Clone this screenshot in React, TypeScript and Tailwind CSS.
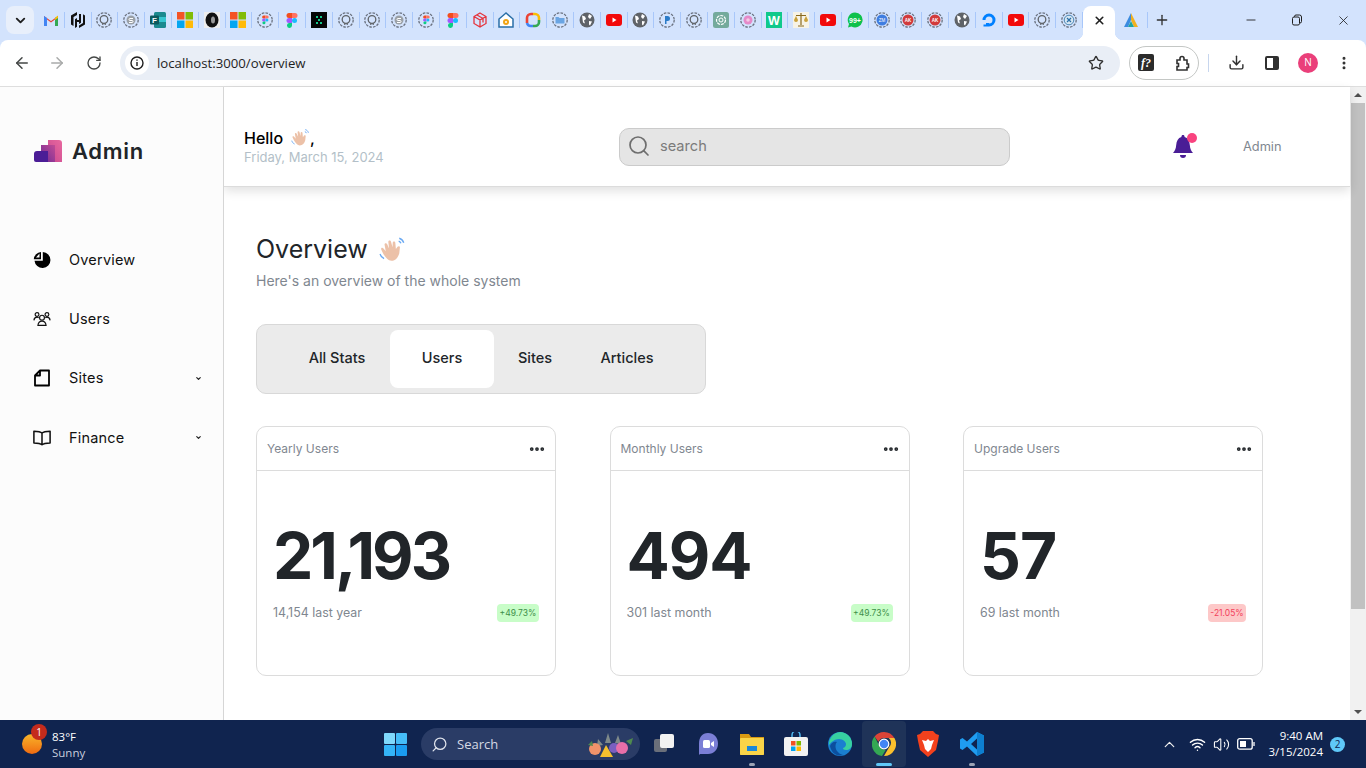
import { ArrowLeft, ArrowRight, ChevronDown, ChevronUp, Download, Ellipsis, EllipsisVertical, Minus, Plus, RotateCw, Search, Star, Volume2, Wifi, X } from "lucide-react";

const UI = "font-['Inter',sans-serif]";
const SEGOE = "font-['Open_Sans',sans-serif]";

const FAVS = ["gmail", "hash", "gh", "s", "forms", "ms", "ring", "ms2", "figd", "figma", "x", "gh", "gh", "s", "figd", "figma", "cube", "home", "google", "folder", "globe", "yt", "globe", "p", "gh", "gpt", "flower", "w", "scale", "yt", "wa", "zm", "ak", "ak", "globe", "do", "yt", "gh", "xd"];

function Dashed({ fill = "none", children }: { fill?: string; children?: React.ReactNode }) {
  return (
    <svg width="16" height="16" viewBox="0 0 16 16">
      <circle cx="8" cy="8" r="7.2" fill={fill} stroke="#6b7280" strokeWidth="1.3" strokeDasharray="2.6 1.2" />
      {children}
    </svg>
  );
}

function FigmaMark() {
  return (
    <>
      <path d="M5 1h3v5H5a2.5 2.5 0 0 1 0-5z" fill="#f24e1e" />
      <path d="M8 1h3a2.5 2.5 0 0 1 0 5H8z" fill="#ff7262" />
      <path d="M5 6h3v5H5a2.5 2.5 0 0 1 0-5z" fill="#a259ff" />
      <circle cx="10.5" cy="8.5" r="2.5" fill="#1abcfe" />
      <path d="M5 11h3v2.5a2.5 2.5 0 1 1-3-2.5z" fill="#0acf83" />
    </>
  );
}

function MsMark({ a, b, c, d }: { a: string; b: string; c: string; d: string }) {
  return (
    <svg width="16" height="16" viewBox="0 0 16 16">
      <rect width="7.5" height="7.5" fill={a} />
      <rect x="8.5" width="7.5" height="7.5" fill={b} />
      <rect y="8.5" width="7.5" height="7.5" fill={c} />
      <rect x="8.5" y="8.5" width="7.5" height="7.5" fill={d} />
    </svg>
  );
}

function Globe() {
  return (
    <svg width="16" height="16" viewBox="0 0 16 16">
      <circle cx="8" cy="8" r="7.5" fill="#5f6368" />
      <path d="M3 3.5l3 1 1 2.5-2 1.5 1 3-2-1zM10 2l3 2-2 3-2-2zM10 9l3 .5-2 4-1-1z" fill="#fff" />
    </svg>
  );
}

function Fav({ kind }: { kind: string }) {
  switch (kind) {
    case "gmail":
      return (
        <svg width="16" height="16" viewBox="0 0 16 16">
          <path d="M1 14V4l7 5 7-5v10h-3V7.500L8 10.500 4 7.500V14z" fill="#ea4335" />
          <path d="M1 4v10h3V6z" fill="#4285f4" />
          <path d="M15 4v10h-3V6z" fill="#34a853" />
          <path d="M12 6l3-2.500V6l-3 2z" fill="#fbbc04" />
        </svg>
      );
    case "hash":
      return (
        <svg width="16" height="16" viewBox="0 0 16 16" fill="#111">
          <path d="M7 0L1 3.500v9l2.500 1.500V5L7 3zM9 2v6H7V6L5 7.200V16l2-1.200V10h2v2l2-1.200V2zM13 2.200V11L9 13.500V16l6-3.500v-9z" />
        </svg>
      );
    case "gh":
      return (
        <Dashed>
          <circle cx="8" cy="7.500" r="3.800" fill="none" stroke="#5f6368" strokeWidth="1.300" />
          <path d="M6.800 11v2M9.200 11v2" stroke="#5f6368" strokeWidth="1.200" />
        </Dashed>
      );
    case "s":
      return (
        <Dashed>
          <circle cx="8" cy="8" r="4.500" fill="#9aa0a6" />
          <path d="M10 6.500H7a1 1 0 0 0 0 2h2a1 1 0 0 1 0 2H6" fill="none" stroke="#fff" strokeWidth="1" />
        </Dashed>
      );
    case "forms":
      return (
        <svg width="16" height="16" viewBox="0 0 16 16">
          <rect x="4" y="0" width="12" height="16" rx="1.500" fill="#1b8a8f" />
          <rect x="4" y="5" width="12" height="5" fill="#37c6d0" />
          <rect y="3.500" width="9" height="9" rx="1" fill="#0b5a5f" />
          <text x="4.500" y="11" textAnchor="middle" fontSize="8" fontWeight="700" fill="#fff" fontFamily="Liberation Sans">F</text>
        </svg>
      );
    case "ms":
      return <MsMark a="#f35325" b="#81bc06" c="#05a6f0" d="#ffba08" />;
    case "ms2":
      return <MsMark a="#f35325" b="#81bc06" c="#05a6f0" d="#ffba08" />;
    case "ring":
      return (
        <svg width="16" height="16" viewBox="0 0 16 16">
          <rect width="16" height="16" fill="#eee" />
          <ellipse cx="8" cy="8" rx="6.500" ry="7.500" fill="#111" />
          <ellipse cx="9" cy="8" rx="2" ry="3.500" fill="#999" />
        </svg>
      );
    case "figd":
      return (
        <Dashed>
          <g transform="translate(3.600 2.800) scale(.6)">
            <FigmaMark />
          </g>
        </Dashed>
      );
    case "figma":
      return (
        <svg width="16" height="16" viewBox="0 0 16 16">
          <FigmaMark />
        </svg>
      );
    case "x":
      return (
        <svg width="16" height="16" viewBox="0 0 16 16">
          <rect width="16" height="16" fill="#050505" />
          <path d="M5 4h2v2H5zM9 4h2v2H9zM7 7h2v2H7zM5 10h2v2H5zM9 10h2v2H9z" fill="#14c88c" />
        </svg>
      );
    case "cube":
      return (
        <svg width="16" height="16" viewBox="0 0 16 16" fill="none" stroke="#e5343d" strokeWidth="1.300">
          <path d="M8 1l6 3.500v7L8 15l-6-3.500v-7zM2 4.500L8 8l6-3.500M8 8v7M5 3l6 3.500v4" />
        </svg>
      );
    case "home":
      return (
        <svg width="16" height="16" viewBox="0 0 16 16">
          <path d="M8 1L1 7v8h14V7z" fill="#fff" stroke="#2a6fa8" strokeWidth="1.500" />
          <circle cx="8" cy="10" r="3" fill="#f2a516" />
          <circle cx="8" cy="10" r="1" fill="#fff" />
        </svg>
      );
    case "google":
      return (
        <svg width="16" height="16" viewBox="0 0 16 16" fill="none" strokeWidth="2.600">
          <path d="M2 11V6a4 4 0 0 1 4-4h2" stroke="#ea4335" />
          <path d="M8 2h2a4 4 0 0 1 4 4v2" stroke="#fbbc04" />
          <path d="M14 8v2a4 4 0 0 1-4 4H8" stroke="#34a853" />
          <path d="M8 14H6a4 4 0 0 1-4-3" stroke="#4285f4" />
        </svg>
      );
    case "folder":
      return (
        <Dashed>
          <path d="M3.500 5h3l1 1h5v5.500h-9z" fill="#6aa5e3" />
        </Dashed>
      );
    case "globe":
      return <Globe />;
    case "yt":
      return (
        <svg width="16" height="16" viewBox="0 0 16 16">
          <rect y="2" width="16" height="12" rx="3" fill="#f20a0a" />
          <path d="M6.500 5.500L10.500 8l-4 2.500z" fill="#fff" />
        </svg>
      );
    case "p":
      return (
        <Dashed>
          <path d="M6 4h2.500a2 2 0 0 1 0 5H7.500v3H6z" fill="#2a7bc8" />
        </Dashed>
      );
    case "gpt":
      return (
        <svg width="16" height="16" viewBox="0 0 16 16">
          <rect width="16" height="16" rx="2.500" fill="#74aa9c" />
          <circle cx="8" cy="8" r="4.500" fill="none" stroke="#fff" strokeWidth="1.200" strokeDasharray="3 1" />
          <circle cx="8" cy="8" r="2" fill="none" stroke="#fff" strokeWidth="1" />
        </svg>
      );
    case "flower":
      return (
        <Dashed>
          <circle cx="8" cy="8" r="4.500" fill="#e58ac9" />
          <circle cx="8" cy="8" r="1.800" fill="#f6c9e6" />
        </Dashed>
      );
    case "w":
      return (
        <svg width="16" height="16" viewBox="0 0 16 16">
          <rect width="16" height="16" fill="#0fc98b" />
          <text x="8" y="13" textAnchor="middle" fontSize="12.500" fontWeight="700" fill="#fff" fontFamily="Liberation Sans">W</text>
        </svg>
      );
    case "scale":
      return (
        <svg width="16" height="16" viewBox="0 0 16 16">
          <rect width="16" height="16" fill="#f7f3e6" />
          <path d="M8 1v12M3 3.500h10M5 14h6" stroke="#8a6a1f" strokeWidth="1.200" />
          <path d="M1 8l2-4 2 4a2 2 0 0 1-4 0zM11 8l2-4 2 4a2 2 0 0 1-4 0z" fill="#c9a13b" />
        </svg>
      );
    case "wa":
      return (
        <svg width="16" height="16" viewBox="0 0 16 16">
          <path d="M8 .500a7.500 7.500 0 1 1-3.500 14.100L1 15.500l1-3.400A7.500 7.500 0 0 1 8 .500z" fill="#0fc14b" />
          <text x="8" y="10.500" textAnchor="middle" fontSize="7" fontWeight="700" fill="#fff" fontFamily="Liberation Sans">99+</text>
        </svg>
      );
    case "zm":
      return (
        <Dashed>
          <circle cx="8" cy="8" r="5.500" fill="#3f7de0" />
          <text x="8" y="9.800" textAnchor="middle" fontSize="4.500" fill="#fff" fontFamily="Liberation Sans">ZM</text>
        </Dashed>
      );
    case "ak":
      return (
        <Dashed>
          <circle cx="8" cy="8" r="5.500" fill="#d23b3b" />
          <text x="8" y="9.800" textAnchor="middle" fontSize="4.500" fontWeight="700" fill="#fff" fontFamily="Liberation Sans">AK</text>
        </Dashed>
      );
    case "do":
      return (
        <svg width="16" height="16" viewBox="0 0 16 16" fill="none">
          <path d="M8 14.500V11.500a3.500 3.500 0 1 0-3.500-3.500H1.500A6.500 6.500 0 1 1 8 14.500z" fill="#0080ff" />
          <path d="M5 11h3v3.500H5zM2.500 12.500H5v2H2.500z" fill="#0080ff" />
        </svg>
      );
    default:
      return (
        <Dashed>
          <circle cx="8" cy="8" r="4.800" fill="#d6e6f2" stroke="#4b86b4" strokeWidth="1" />
          <path d="M6 6l4 4M10 6l-4 4" stroke="#2a6fa8" strokeWidth="1.200" />
        </Dashed>
      );
  }
}

function TabStrip() {
  return (
    <div className="flex h-10 shrink-0 items-center">
      <div className="ml-[6px] mr-[4px] flex h-[28px] w-[28px] shrink-0 items-center justify-center rounded-lg bg-[#e8effb]">
        <ChevronDown size={15} strokeWidth={3} className="text-[#1f1f1f]" />
      </div>
      {FAVS.map((kind, i) => (
        <div key={i} className="flex h-[16px] w-[26.800px] shrink-0 items-center justify-between">
          <div className="flex w-[25.800px] justify-center">
            <Fav kind={kind} />
          </div>
          <div className="h-[16px] w-px bg-[#a8c7fa]" />
        </div>
      ))}
      <div className="relative mt-[6px] flex h-[34px] w-[32px] shrink-0 items-center justify-center rounded-t-lg bg-white">
        <X size={13} strokeWidth={3} className="mb-[6px] text-[#1f1f1f]" />
        <span className="absolute bottom-0 left-[-8px] h-[8px] w-[8px] bg-[radial-gradient(circle_at_0_0,#d3e3fd_8px,#ffffff_8.500px)]" />
        <span className="absolute bottom-0 right-[-8px] h-[8px] w-[8px] bg-[radial-gradient(circle_at_100%_0,#d3e3fd_8px,#ffffff_8.500px)]" />
      </div>
      <div className="flex w-[32px] shrink-0 justify-center">
        <svg width="16" height="16" viewBox="0 0 16 16">
          <path d="M8 1L1 15h4l3-7z" fill="#3b8be0" />
          <path d="M8 1l7 14h-4L8 8z" fill="#f2b01e" />
          <path d="M5 15l3-6 3 6z" fill="#1ea5a0" />
        </svg>
      </div>
      <div className="h-[16px] w-px bg-[#a8c7fa]" />
      <div className="flex w-[27px] shrink-0 justify-center">
        <Plus size={16} strokeWidth={2} className="text-[#303030]" />
      </div>
      <div className="ml-auto flex items-center text-[#1f1f1f]">
        <div className="flex w-[46px] justify-center">
          <Minus size={14} strokeWidth={1.500} />
        </div>
        <div className="flex w-[46px] justify-center">
          <svg width="12" height="12" viewBox="0 0 12 12" fill="none" stroke="currentColor">
            <rect x="1.500" y="3" width="7" height="8" rx="1.500" />
            <path d="M3.500 3V2.500a1.500 1.500 0 0 1 1.500-1.500h3.500a2 2 0 0 1 2 2v4.500a1.500 1.500 0 0 1-1.500 1.500" />
          </svg>
        </div>
        <div className="flex w-[46px] justify-center">
          <X size={15} strokeWidth={1.300} />
        </div>
      </div>
    </div>
  );
}

function Toolbar() {
  return (
    <div className="flex h-[47px] shrink-0 items-center rounded-t-lg border-b border-[#dedede] bg-white pb-px">
      <div className="flex w-[120px] shrink-0 items-center pl-[13px] text-[#444746]">
        <ArrowLeft size={18} strokeWidth={2} />
        <ArrowRight size={18} strokeWidth={2} className="ml-[17px] text-[#a9abaa]" />
        <RotateCw size={16} strokeWidth={2} className="ml-[20px]" />
      </div>
      <div className="flex h-[34px] w-[1000px] shrink-0 items-center rounded-full bg-[#e9eef6] pl-[5px] pr-[16px]">
        <div className="flex h-[24px] w-[24px] items-center justify-center rounded-full bg-white">
          <svg width="14" height="14" viewBox="0 0 14 14" fill="none" stroke="#1f1f1f" strokeWidth="1.400">
            <circle cx="7" cy="7" r="6" />
            <path d="M7 6v4M7 3.500v1.200" />
          </svg>
        </div>
        <span className={`ml-[8px] mt-[2px] text-[13.200px] text-[#1f1f1f] ${SEGOE}`}>localhost:3000/overview</span>
        <Star size={16} strokeWidth={2} className="ml-auto text-[#303030]" />
      </div>
      <div className="ml-[9px] flex h-[34px] w-[70px] shrink-0 items-center justify-between rounded-full border border-[#c4c7c5] pl-[8px] pr-[6px]">
        <div className="flex h-[17px] w-[16px] items-center justify-center rounded-[2px] bg-[#2b2b2b] font-['Liberation_Serif',serif] text-[12px] font-bold italic text-white">
          f?
        </div>
        <svg width="18" height="18" viewBox="0 0 18 18" fill="none" stroke="#303030" strokeWidth="1.600">
          <path d="M3 6h3V4.500a2 2 0 0 1 4 0V6h3v4h1.500v3.500H13V16H3v-3.500h1.500V9.500H3z" />
        </svg>
      </div>
      <div className="ml-[9px] h-[18px] w-px bg-[#c7d6ee]" />
      <div className="ml-[17px] flex w-[20px] justify-center text-[#303030]">
        <Download size={17} strokeWidth={2} />
      </div>
      <div className="ml-[16px] flex w-[20px] justify-center">
        <svg width="14" height="14" viewBox="0 0 14 14">
          <rect x="1" y="1" width="12" height="12" rx="1" fill="#fff" stroke="#303030" strokeWidth="2" />
          <rect x="8" y="1" width="5" height="12" fill="#303030" />
        </svg>
      </div>
      <div className={`ml-[16px] flex h-[20px] w-[20px] items-center justify-center rounded-full bg-[#ea3f7a] text-[10px] text-white ${SEGOE}`}>
        N
      </div>
      <EllipsisVertical size={16} strokeWidth={2.500} className="ml-[18px] text-[#303030]" />
    </div>
  );
}

function Logo() {
  return (
    <svg width="28" height="22" viewBox="0 0 28 22">
      <defs>
        <linearGradient id="lg1" x1="0" y1="1" x2="1" y2="0">
          <stop offset="0" stopColor="#c8478f" />
          <stop offset="1" stopColor="#e8689f" />
        </linearGradient>
        <linearGradient id="lg2" x1="0" y1="1" x2="1" y2="0">
          <stop offset="0" stopColor="#6e2a96" />
          <stop offset="1" stopColor="#c14b95" />
        </linearGradient>
      </defs>
      <path d="M14 0h11a3 3 0 0 1 3 3v19H14z" fill="url(#lg1)" />
      <path d="M7 5h14v17H7z" fill="url(#lg2)" />
      <path d="M3 11h11v11H2a2 2 0 0 1-2-2v-6a3 3 0 0 1 3-3z" fill="#4b1d96" />
    </svg>
  );
}

function PieIcon() {
  return (
    <svg width="18" height="18" viewBox="0 0 18 18">
      <path d="M9.800 1A8 8 0 1 1 1.500 9.800H9.800z" fill="#000" />
      <path d="M8 .900v7.300H.800A8 8 0 0 1 8 .900z" fill="#000" />
      <path d="M3 6.500L6.500 2.500v4z" fill="#fcfcfc" />
    </svg>
  );
}

function UsersIcon() {
  return (
    <svg width="20" height="16" viewBox="0 0 20 16" fill="none" stroke="#111" strokeWidth="1.300">
      <circle cx="10" cy="6.500" r="2.700" />
      <path d="M5.500 15c.3-3 2-4.700 4.500-4.700s4.200 1.700 4.500 4.700z" />
      <circle cx="4.500" cy="3" r="2.100" />
      <circle cx="15.500" cy="3" r="2.100" />
      <path d="M1 9.500c.2-2 1.500-3.500 3.500-3.500.7 0 1.300.2 1.800.5M19 9.500c-.2-2-1.500-3.500-3.500-3.500-.7 0-1.300.2-1.800.5" />
    </svg>
  );
}

function SiteIcon() {
  return (
    <svg width="18" height="18" viewBox="0 0 18 18" fill="none" stroke="#000" strokeWidth="1.800" strokeLinejoin="round">
      <path d="M7 1.500h9v15H2V6.500zM7 1.500v5H2" />
    </svg>
  );
}

function BookIcon() {
  return (
    <svg width="20" height="18" viewBox="0 0 20 18" fill="none" stroke="#111" strokeWidth="1.700" strokeLinejoin="round">
      <path d="M10 3.500C8.500 2 6 1.500 1 1.500v13c5 0 7.500.5 9 2 1.500-1.500 4-2 9-2v-13c-5 0-7.500.5-9 2zM10 3.500v13" />
    </svg>
  );
}

function NavItem({ icon, label, caret }: { icon: React.ReactNode; label: string; caret?: boolean }) {
  return (
    <div className="flex h-[59.300px] items-center pl-[33px] pr-[21px]">
      <div className="flex w-[18px] shrink-0 justify-center">{icon}</div>
      <span className={`ml-[18px] text-[14.500px] tracking-[0.200px] text-[#111] ${UI}`}>{label}</span>
      {caret && <ChevronDown size={7} strokeWidth={4} className="ml-auto text-[#222]" />}
    </div>
  );
}

function Sidebar() {
  return (
    <aside className="relative z-20 w-[224px] shrink-0 border-r border-[#d6d6d6] bg-[#fcfcfc]">
      <div className="flex items-center pl-[34px] pt-[53px]">
        <Logo />
        <span className={`ml-[10px] text-[22px] font-semibold leading-[22px] tracking-[0.700px] text-[#212529] ${UI}`}>Admin</span>
      </div>
      <nav className="mt-[68px]">
        <NavItem icon={<PieIcon />} label="Overview" />
        <NavItem icon={<UsersIcon />} label="Users" />
        <NavItem icon={<SiteIcon />} label="Sites" caret />
        <NavItem icon={<BookIcon />} label="Finance" caret />
      </nav>
    </aside>
  );
}

function Wave({ size }: { size: number }) {
  return (
    <svg width={size} height={size} viewBox="0 0 24 24" className="inline-block">
      <path d="M7 20c-3-3-4-6-5-8-.6-1.400 1-2.200 2-1l2 2.500L5 8c-.4-1.500 1.500-2.200 2.200-.8L9 11 8.300 5.500c-.2-1.600 2-2 2.400-.4l1.300 5 .2-4c.1-1.600 2.200-1.500 2.300 0l.5 5.500 1.500-2c1-1.200 2.600-.2 2 1.200L18 15.500c-1 3-2 5-4.500 6S9 22 7 20z" fill="#ecc1a8" />
      <path d="M18 2c2 .5 3.300 1.800 4 4M17.500 4.500c1 .3 1.700 1 2 2M1 16c.5 2 1.600 3.300 3.500 4.200" fill="none" stroke="#6aa9f2" strokeWidth="1.200" />
    </svg>
  );
}

function Header() {
  return (
    <header className="relative z-10 flex h-[100px] shrink-0 items-center border-b border-[#dcdcdc] bg-white pl-[20px] pt-[20px] shadow-[0_4px_10px_rgba(0,0,0,0.12)]">
      <div className="w-[375px] shrink-0">
        <div className={`flex items-center text-[16px] font-medium leading-[20px] text-black ${UI}`}>
          Hello <span className="ml-[8px] flex"><Wave size={19} /></span>,
        </div>
        <div className={`text-[13px] leading-[18px] text-[#b3bfc8] ${UI}`}>Friday, March 15, 2024</div>
      </div>
      <div className="flex h-[38px] w-[391px] shrink-0 items-center rounded-[10px] border border-[#cbcbcb] bg-[#e5e5e5] pl-[7px]">
        <Search size={24} strokeWidth={1.700} className="mb-px text-[#6e6e6e]" />
        <span className={`ml-[9px] text-[14.600px] text-[#7b7b7b] ${UI}`}>search</span>
      </div>
      <div className="relative ml-[160px] flex h-[26px] w-[26px] shrink-0 items-center justify-center">
        <svg width="24" height="26" viewBox="0 0 24 26">
          <path d="M12 1c1 0 1.500.6 1.600 2C17 4 18.500 7 18.800 11c.3 4 1.500 6 3.200 8H2c1.700-2 2.900-4 3.200-8C5.500 7 7 4 10.400 3c.1-1.400.6-2 1.600-2z" fill="#4a1d96" />
          <path d="M9 21h6a3 3 0 0 1-6 0z" fill="#4a1d96" />
        </svg>
        <span className="absolute right-[-1px] top-[-1px] h-[10px] w-[10px] rounded-full bg-[#f9437f]" />
      </div>
      <span className={`ml-[47px] mt-px text-[12.800px] text-[#7f8790] ${UI}`}>Admin</span>
    </header>
  );
}

function StatCard({ title, value, sub, delta, up, tight }: { title: string; value: string; sub: string; delta: string; up: boolean; tight?: boolean }) {
  return (
    <div className="h-[250px] w-[300px] shrink-0 rounded-[10px] border border-[#dcdcdc] bg-white">
      <div className="flex h-[44px] items-center justify-between border-b border-[#dcdcdc] pl-[10px] pr-[9px]">
        <span className={`mt-[1px] text-[12px] text-[#7f8790] ${UI}`}>{title}</span>
        <Ellipsis size={18} strokeWidth={3} className="text-[#212529]" />
      </div>
      <div className="px-[16px] pt-[45px]">
        <div className={`text-[64px] font-bold leading-[80px] text-[#212529] ${tight ? "tracking-[-3px]" : "tracking-[-1px]"} ${UI}`}>{value}</div>
        <div className="mt-[8px] flex items-center justify-between">
          <span className={`text-[12.400px] text-[#7f8790] ${UI}`}>{sub}</span>
          <span
            className={`flex h-[18px] items-center justify-center rounded-[4px] text-[8.500px] ${UI} ${
              up ? "w-[42px] bg-[#c8fdc8] text-[#3f8f4a]" : "w-[38px] bg-[#fdc8c8] text-[#f2405a]"
            }`}
          >
            {delta}
          </span>
        </div>
      </div>
    </div>
  );
}

function Tabs() {
  return (
    <div className={`mt-[33px] flex h-[70px] w-[450px] items-center rounded-[10px] border border-[#d8d8d8] bg-[#ebebeb] pl-[27px] text-[14.500px] font-medium leading-[20px] text-[#212529] ${UI}`}>
      <span className="mb-[2px] w-[106px] text-center">All Stats</span>
      <span className="flex h-[58px] w-[104px] items-center justify-center rounded-[8px] bg-white pb-[2px]">Users</span>
      <span className="mb-[2px] w-[82px] text-center">Sites</span>
      <span className="mb-[2px] w-[102px] text-center">Articles</span>
    </div>
  );
}

function Content() {
  return (
    <section className="flex-1 overflow-hidden bg-white pl-[32px] pt-[46px]">
      <div className="flex items-center">
        <h1 className={`text-[25px] leading-[32px] text-[#212529] ${UI}`}>Overview</h1>
        <span className="ml-[11px] flex"><Wave size={27} /></span>
      </div>
      <p className={`mt-[6px] text-[14px] leading-[20px] text-[#7f8790] ${UI}`}>Here's an overview of the whole system</p>
      <Tabs />
      <div className="mt-[32px] flex gap-[53.500px]">
        <StatCard title="Yearly Users" value="21,193" sub="14,154 last year" delta="+49.73%" up tight />
        <StatCard title="Monthly Users" value="494" sub="301 last month" delta="+49.73%" up />
        <StatCard title="Upgrade Users" value="57" sub="69 last month" delta="-21.05%" up={false} />
      </div>
    </section>
  );
}

function Scrollbar() {
  return (
    <div className="flex w-[16px] shrink-0 flex-col items-center bg-[#f1f1f1]">
      <div className="flex h-[16px] items-center justify-center">
        <div className="h-0 w-0 border-x-[4px] border-b-[4px] border-x-transparent border-b-[#505050]" />
      </div>
      <div className="h-[506px] w-[14px] bg-[#c1c1c1]" />
      <div className="mt-auto flex h-[16px] items-center justify-center">
        <div className="h-0 w-0 border-x-[4px] border-t-[4px] border-x-transparent border-t-[#505050]" />
      </div>
    </div>
  );
}

function TaskSlot({ children, active, dot }: { children: React.ReactNode; active?: boolean; dot?: boolean }) {
  return (
    <div className={`relative flex h-[46px] w-[44px] shrink-0 items-center justify-center rounded-[4px] ${active ? "bg-[#1f3358]" : ""}`}>
      {children}
      {dot && <span className="absolute bottom-[1px] h-[3px] w-[6px] rounded-full bg-[#9aa3b5]" />}
      {active && <span className="absolute bottom-[1px] h-[3px] w-[16px] rounded-full bg-[#5fc8f8]" />}
    </div>
  );
}

function Taskbar() {
  return (
    <footer className={`flex h-[48px] shrink-0 items-center bg-[#10244f] text-white ${SEGOE}`}>
      <div className="relative ml-[22px] h-[20px] w-[20px] shrink-0 rounded-full bg-gradient-to-b from-[#f7b52a] to-[#ef6a10]">
        <span className="absolute left-[9px] top-[-10px] flex h-[16px] w-[16px] items-center justify-center rounded-full bg-[#c42b1c] text-[10px]">1</span>
      </div>
      <div className="ml-[10px] mt-[2px] w-[321px] shrink-0 text-[11.500px] leading-[16px]">
        <div>83°F</div>
        <div className="text-[#c8cede]">Sunny</div>
      </div>
      <TaskSlot>
        <svg width="23" height="23" viewBox="0 0 23 23">
          <rect width="11" height="11" rx="1" fill="#7fd8fb" />
          <rect x="12" width="11" height="11" rx="1" fill="#45bdf8" />
          <rect y="12" width="11" height="11" rx="1" fill="#34b4f7" />
          <rect x="12" y="12" width="11" height="11" rx="1" fill="#1a9cf0" />
        </svg>
      </TaskSlot>
      <div className="ml-[4px] flex h-[32px] w-[219px] shrink-0 items-center rounded-full bg-[#2a3c66] pl-[10px]">
        <Search size={17} strokeWidth={1.800} className="-scale-x-100 text-[#dfe3ec]" />
        <span className="ml-[9px] mt-px text-[13px] text-[#d5d9e4]">Search</span>
        <svg width="54" height="30" viewBox="0 0 54 30" className="ml-auto mr-[4px]">
          <path d="M26 4l3 10-6 0zM36 6l3 9-6-1zM16 10l5 6-6 1z" fill="#7f8a8a" />
          <circle cx="13" cy="20" r="6" fill="#f0936a" />
          <path d="M18 28l6-12 7 12z" fill="#f4c02e" />
          <circle cx="32" cy="19" r="5" fill="#7a5fc0" />
          <circle cx="40" cy="19" r="6" fill="#e76fa8" />
          <path d="M44 12l7-3-2 7zM6 16l4-4 1 5z" fill="#4f8a4f" />
        </svg>
      </div>
      <div className="ml-[2px] flex">
        <TaskSlot>
          <svg width="20" height="20" viewBox="0 0 20 20">
            <rect y="5" width="13" height="13" rx="2" fill="#6a6f7a" />
            <rect x="6" width="14" height="14" rx="2" fill="#f2f2f2" />
          </svg>
        </TaskSlot>
        <TaskSlot>
          <svg width="24" height="24" viewBox="0 0 24 24">
            <path d="M12 1c6 0 10 4.500 10 10.500S18 22 12 22H4l-1 1V11.500C3 5.500 6 1 12 1z" fill="#7b7fd6" />
            <rect x="7" y="8" width="7" height="8" rx="1.500" fill="#fff" />
            <path d="M15 11l3-2v6l-3-2z" fill="#fff" />
          </svg>
        </TaskSlot>
        <TaskSlot dot>
          <svg width="24" height="24" viewBox="0 0 24 24">
            <path d="M0 2h9l2 3h13v17a1 1 0 0 1-1 1H1a1 1 0 0 1-1-1z" fill="#d99a12" />
            <rect y="6" width="24" height="17" rx="1" fill="#f9d448" />
            <rect x="7" y="14" width="10" height="5" fill="#1a88d8" />
          </svg>
        </TaskSlot>
        <TaskSlot>
          <svg width="24" height="24" viewBox="0 0 24 24">
            <path d="M8 5V3a4 4 0 0 1 8 0v2" fill="none" stroke="#4fb8f0" strokeWidth="1.500" />
            <rect y="5" width="24" height="19" rx="2" fill="#f2f2f2" />
            <rect x="7" y="9" width="4.500" height="4.500" fill="#f25022" />
            <rect x="12.500" y="9" width="4.500" height="4.500" fill="#7fba00" />
            <rect x="7" y="14.500" width="4.500" height="4.500" fill="#00a4ef" />
            <rect x="12.500" y="14.500" width="4.500" height="4.500" fill="#ffb900" />
          </svg>
        </TaskSlot>
        <TaskSlot>
          <svg width="24" height="24" viewBox="0 0 24 24">
            <circle cx="12" cy="12" r="12" fill="#1a7fd0" />
            <path d="M12 0a12 12 0 0 1 12 12c0 4-3 6-6 6-2 0-3-1-3-2 2-.5 3-2 3-4s-3-5-7-5-8 3-10 6A12 12 0 0 1 12 0z" fill="#37d0a0" />
            <path d="M2 14c1-3 4-5 7-4-2 2-2 6 0 9 1.500 2 3 3 6 4-7 2-12-3-13-9z" fill="#0c4f9e" />
          </svg>
        </TaskSlot>
        <TaskSlot active>
          <svg width="24" height="24" viewBox="0 0 24 24">
            <path d="M12 0a12 12 0 0 1 10.400 6H12a6 6 0 0 0-5.600 3.800L2.600 4.500A12 12 0 0 1 12 0z" fill="#db4437" />
            <path d="M22.400 6A12 12 0 0 1 12 24l5.200-9a6 6 0 0 0-.4-9z" fill="#fbc02d" />
            <path d="M2.600 4.500L7.800 15a6 6 0 0 0 6 2.800L10 24A12 12 0 0 1 2.600 4.500z" fill="#34a853" />
            <circle cx="12" cy="12" r="4.800" fill="#4285f4" stroke="#fff" strokeWidth="1.200" />
          </svg>
        </TaskSlot>
        <TaskSlot>
          <svg width="22" height="26" viewBox="0 0 22 26">
            <path d="M6 0h10l3 3 3 1-1 6-2 9-8 7-8-7-2-9-1-6 3-1z" fill="#f2411d" />
            <path d="M5 9l4 1 2-2 2 2 4-1-2 5-1 4-3 3-3-3-1-4z" fill="#fff" />
          </svg>
        </TaskSlot>
        <TaskSlot dot>
          <svg width="24" height="24" viewBox="0 0 24 24">
            <path d="M17 0l7 3.500v17L17 24 7 14.500 2.500 18 0 16.500V7.500L2.500 6 7 9.500zM17 6.500L11 12l6 5.500z" fill="#1f9cf0" />
            <path d="M17 0l7 3.500v17L17 24z" fill="#0d7fd0" />
          </svg>
        </TaskSlot>
      </div>
      <ChevronUp size={17} strokeWidth={1.700} className="ml-[167px] text-[#f0f0f0]" />
      <Wifi size={17} strokeWidth={2} className="ml-[11px]" />
      <Volume2 size={17} strokeWidth={1.500} className="ml-[7px]" />
      <svg width="18" height="12" viewBox="0 0 18 12" className="ml-[7px]" fill="none" stroke="#fff" strokeWidth="1.300">
        <rect x=".700" y=".700" width="14.500" height="10.500" rx="2" />
        <rect x="3" y="3" width="6" height="6" fill="#fff" stroke="none" />
        <path d="M17 4v4" />
      </svg>
      <div className="ml-[8px] w-[60px] shrink-0 text-right text-[11.500px] leading-[16px]">
        <div>9:40 AM</div>
        <div>3/15/2024</div>
      </div>
      <span className="ml-[7px] flex h-[15px] w-[15px] items-center justify-center rounded-full bg-[#5fc8f8] text-[10px] text-[#10244f]">2</span>
    </footer>
  );
}

export default function App() {
  return (
    <div className="flex h-[768px] w-[1366px] flex-col overflow-hidden bg-[#d3e3fd]">
      <TabStrip />
      <Toolbar />
      <div className="flex min-h-0 flex-1 bg-white">
        <Sidebar />
        <div className="flex min-w-0 flex-1 flex-col">
          <Header />
          <Content />
        </div>
        <Scrollbar />
      </div>
      <Taskbar />
    </div>
  );
}
